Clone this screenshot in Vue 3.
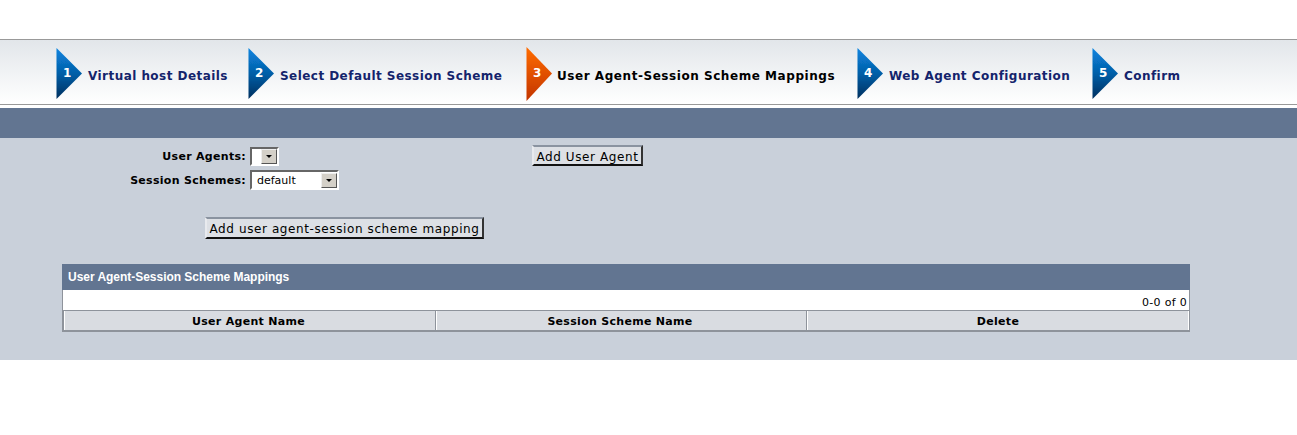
<script setup>
const steps = [
  { n: 1, label: 'Virtual host Details', active: false },
  { n: 2, label: 'Select Default Session Scheme', active: false },
  { n: 3, label: 'User Agent-Session Scheme Mappings', active: true },
  { n: 4, label: 'Web Agent Configuration', active: false },
  { n: 5, label: 'Confirm', active: false }
]
const columns = ['User Agent Name', 'Session Scheme Name', 'Delete']
</script>

<template>
  <div class="page">
    <nav class="steps">
      <div v-for="s in steps" :key="s.n" class="step" :class="{ active: s.active }">
        <span class="arrow">
          <svg width="27" height="54" viewBox="0 0 27 54">
            <defs>
              <linearGradient id="gb" x1="0" y1="0" x2="0" y2="1">
                <stop offset="0" stop-color="#0a84e0" />
                <stop offset="0.5" stop-color="#045fa8" />
                <stop offset="1" stop-color="#012f5e" />
              </linearGradient>
              <linearGradient id="go" x1="0" y1="0" x2="0" y2="1">
                <stop offset="0" stop-color="#ff6c00" />
                <stop offset="1" stop-color="#c23400" />
              </linearGradient>
              <filter id="soft" x="-10%" y="-10%" width="120%" height="120%">
                <feGaussianBlur stdDeviation="0.6" />
              </filter>
            </defs>
            <polygon v-if="s.active" points="0.5,0 26,26.5 0.5,54" fill="url(#go)" filter="url(#soft)" />
            <polygon v-else points="0.5,1 26,26.5 0.5,52" fill="url(#gb)" filter="url(#soft)" />
          </svg>
          <b class="num">{{ s.n }}</b>
        </span>
        <span class="label">{{ s.label }}</span>
      </div>
    </nav>
    <div class="band"></div>
    <main class="panel">
      <div class="form">
        <div class="fields">
          <div class="field">
            <label>User Agents:</label>
            <span class="select narrow"><span class="val"></span><i class="drop"></i></span>
          </div>
          <div class="field">
            <label>Session Schemes:</label>
            <span class="select wide"><span class="val">default</span><i class="drop"></i></span>
          </div>
        </div>
        <button class="btn add-agent" type="button">Add User Agent</button>
      </div>
      <button class="btn add-map" type="button">Add user agent-session scheme mapping</button>
      <section class="table">
        <h2>User Agent-Session Scheme Mappings</h2>
        <div class="count">0-0 of 0</div>
        <div class="head">
          <div v-for="c in columns" :key="c" class="th">{{ c }}</div>
        </div>
      </section>
    </main>
  </div>
</template>

<style>
html, body { margin: 0; background: #fff; }
</style>

<style scoped>
.page {
  padding-top: 39px;
  font-family: "DejaVu Sans", Verdana, sans-serif;
  font-size: 11px;
  color: #000;
}
.steps {
  display: grid;
  grid-template-columns: 192px 278px 331px 235px auto;
  align-items: center;
  height: 64px;
  padding-left: 56px;
  border-top: 1px solid #999;
  border-bottom: 1px solid #999;
  background: linear-gradient(#e2e6ea, #fff);
}
.step { display: flex; align-items: center; }
.arrow { position: relative; display: block; width: 27px; height: 54px; margin-top: 4px; }
.arrow svg { display: block; }
.num {
  position: absolute;
  left: 7px;
  top: 19px;
  color: #fff;
  font: bold 12px "DejaVu Sans", sans-serif;
}
.label {
  margin: 8px 0 0 5px;
  font-weight: bold;
  font-size: 12px;
  letter-spacing: 0.45px;
  color: #14246c;
  white-space: nowrap;
}
.active .label { color: #000; margin-left: 4px; letter-spacing: 0.55px; }
.band { height: 30px; margin-top: 3px; background: #627591; }
.panel { height: 222px; background: #c9d0da; overflow: hidden; }
.form { display: flex; padding-top: 8px; }
.fields { width: 532px; }
.field { display: flex; align-items: center; height: 20px; margin-bottom: 4px; }
.field label {
  width: 250px;
  padding-right: 4px;
  box-sizing: border-box;
  text-align: right;
  font-weight: bold;
  letter-spacing: 0.3px;
  white-space: nowrap;
}
.select {
  display: flex;
  align-items: center;
  box-sizing: border-box;
  height: 19px;
  background: #fff;
  border: 2px solid;
  border-color: #666 #fff #fff #666;
}
.narrow { width: 29px; }
.wide { width: 89px; height: 20px; }
.val { flex: 1; padding-left: 5px; }
.drop {
  position: relative;
  width: 16px;
  height: 15px;
  box-sizing: border-box;
  background: #d4d0c8;
  border: 1px solid;
  border-color: #eee #555 #555 #eee;
}
.drop::after {
  content: "";
  position: absolute;
  left: 4px;
  top: 5px;
  border: 3px solid transparent;
  border-top: 3px solid #000;
  border-bottom: 0;
}
.btn {
  display: block;
  margin: 0;
  padding: 2px 0 0;
  height: 22px;
  box-sizing: border-box;
  font: 12px "DejaVu Sans", sans-serif;
  letter-spacing: 0.6px;
  color: #000;
  background: #dde0e5;
  border: 2px solid;
  border-color: #8a93a0 #333 #111 #e8eaee;
  white-space: nowrap;
}
.add-agent { width: 111px; height: 21px; margin-top: -1px; }
.add-map { width: 279px; margin: 23px 0 0 205px; }
.table { margin: 25px 107px 0 62px; }
.table h2 {
  margin: 0;
  height: 26px;
  padding-left: 6px;
  background: #627591;
  color: #fff;
  font: bold 12px/26px "Liberation Sans", Arial, sans-serif;
  letter-spacing: -0.03px;
}
.count {
  height: 20px;
  box-sizing: border-box;
  padding: 6px 2px 0 0;
  background: #fff;
  border: 1px solid #8e939b;
  border-width: 0 1px;
  text-align: right;
  line-height: 13px;
  letter-spacing: 0.3px;
}
.head {
  display: grid;
  grid-template-columns: 372px 371px 1fr;
  border: 1px solid #8e939b;
  border-width: 1px 2px 2px 2px;
  border-right-width: 1px;
  background: #d9dce1;
}
.th {
  height: 19px;
  line-height: 21px;
  text-align: center;
  font-weight: bold;
  letter-spacing: 0.3px;
  border-left: 1px solid #fff;
  border-right: 1px solid #8e939b;
}
.th:not(:last-child) { padding-right: 3px; }
.th:last-child { border-right: 1px solid #fff; }
</style>
